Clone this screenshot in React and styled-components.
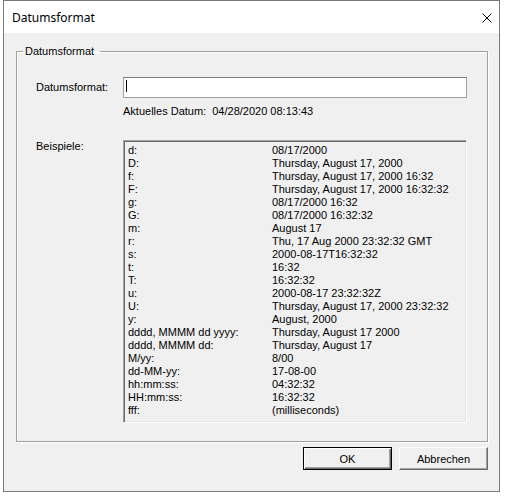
import { Fragment } from 'react';
import styled, { createGlobalStyle } from 'styled-components';

const GlobalStyle = createGlobalStyle`
  html, body {
    margin: 0;
    padding: 0;
    background: #fff;
  }
  body {
    font-family: "Liberation Sans", Arial, sans-serif;
    font-size: 11px;
    color: #000;
  }
`;

const EXAMPLES = [
  ['d:', '08/17/2000'],
  ['D:', 'Thursday, August 17, 2000'],
  ['f:', 'Thursday, August 17, 2000 16:32'],
  ['F:', 'Thursday, August 17, 2000 16:32:32'],
  ['g:', '08/17/2000 16:32'],
  ['G:', '08/17/2000 16:32:32'],
  ['m:', 'August 17'],
  ['r:', 'Thu, 17 Aug 2000 23:32:32 GMT'],
  ['s:', '2000-08-17T16:32:32'],
  ['t:', '16:32'],
  ['T:', '16:32:32'],
  ['u:', '2000-08-17 23:32:32Z'],
  ['U:', 'Thursday, August 17, 2000 23:32:32'],
  ['y:', 'August, 2000'],
  ['dddd, MMMM dd yyyy:', 'Thursday, August 17 2000'],
  ['dddd, MMMM dd:', 'Thursday, August 17'],
  ['M/yy:', '8/00'],
  ['dd-MM-yy:', '17-08-00'],
  ['hh:mm:ss:', '04:32:32'],
  ['HH:mm:ss:', '16:32:32'],
  ['fff:', '(milliseconds)'],
];

const Window = styled.div`
  box-sizing: border-box;
  width: 497px;
  height: 492px;
  margin-left: 3px;
  border: 1px solid #7a7a7a;
  background: #f0f0f0;
  display: flex;
  flex-direction: column;
`;

const TitleBar = styled.div`
  height: 32px;
  flex: none;
  background: #fff;
  display: flex;
  align-items: center;
  justify-content: space-between;
  padding: 0 7px 0 8px;
  font-family: "Noto Sans", "Open Sans", sans-serif;
  font-size: 12px;
`;

const Title = styled.span`
  line-height: 16px;
  padding-top: 1px;
`;

const CloseIcon = styled.svg`
  width: 10px;
  height: 10px;
  display: block;
  margin-top: 1px;
`;

const Body = styled.div`
  flex: 1;
  display: flex;
  flex-direction: column;
  padding: 12px 11px 21px 12px;
`;

const GroupBox = styled.fieldset`
  flex: 1;
  min-width: 0;
  margin: 0;
  padding: 0;
  border: 1px solid #a0a0a0;
  box-shadow: inset 1px 1px #fff, 1px 1px #fff;
`;

const Legend = styled.legend`
  margin-left: 6px;
  padding: 0 6px 0 2px;
  line-height: 13px;
`;

const Form = styled.div`
  display: grid;
  grid-template-columns: 87px 344px;
  padding: 19px 0 0 19px;
`;

const Label = styled.span`
  line-height: 13px;
  align-self: ${(p) => (p.$top ? 'start' : 'center')};
  margin-top: ${(p) => (p.$top ? '22px' : '0')};
`;

const TextBox = styled.div`
  box-sizing: border-box;
  height: 21px;
  background: #fff;
  border: 1px solid #a0a0a0;
  border-top-color: #7a7a7a;
  padding: 2px 0 0 2px;
`;

const Caret = styled.span`
  display: block;
  width: 1px;
  height: 12px;
  background: #000;
`;

const CurrentDate = styled.div`
  grid-column: 2;
  margin-top: 7px;
  line-height: 13px;
`;

const ExampleList = styled.div`
  grid-column: 2;
  box-sizing: border-box;
  height: 283px;
  margin-top: 22px;
  border-style: solid;
  border-width: 1px;
  border-color: #a0a0a0 #fff #fff #a0a0a0;
  box-shadow: inset 1px 1px #696969, inset -1px -1px #e3e3e3;
  padding: 3px 4px;
  display: grid;
  grid-template-columns: 144px auto;
  align-content: start;
  line-height: 13px;
  white-space: nowrap;
`;

const ButtonRow = styled.div`
  display: flex;
  justify-content: flex-end;
  gap: 7px;
  margin-top: 5px;
`;

const Button = styled.button`
  box-sizing: border-box;
  width: 89px;
  height: 23px;
  margin: 0;
  padding: 0;
  font-family: "Liberation Sans", Arial, sans-serif;
  font-size: 11px;
  color: #000;
  background: #f0f0f0;
  border-style: solid;
  border-width: 1px;
  border-color: ${(p) => (p.$default ? '#000' : '#fff #696969 #696969 #fff')};
  box-shadow: ${(p) =>
    p.$default
      ? 'inset 1px 1px #fff, inset -1px -1px #696969, inset -2px -2px #a0a0a0'
      : 'inset -1px -1px #a0a0a0'};
`;

const App = () => (
  <>
    <GlobalStyle />
    <Window>
      <TitleBar>
        <Title>Datumsformat</Title>
        <CloseIcon viewBox="0 0 10 10">
          <path d="M0.5 0.5 L9.5 9.5 M9.5 0.5 L0.5 9.5" stroke="#000" strokeWidth="1" />
        </CloseIcon>
      </TitleBar>
      <Body>
        <GroupBox>
          <Legend>Datumsformat</Legend>
          <Form>
            <Label>Datumsformat:</Label>
            <TextBox>
              <Caret />
            </TextBox>
            <CurrentDate>Aktuelles Datum:&nbsp; 04/28/2020 08:13:43</CurrentDate>
            <Label $top>Beispiele:</Label>
            <ExampleList>
              {EXAMPLES.map(([format, sample]) => (
                <Fragment key={format}>
                  <span>{format}</span>
                  <span>{sample}</span>
                </Fragment>
              ))}
            </ExampleList>
          </Form>
        </GroupBox>
        <ButtonRow>
          <Button $default>OK</Button>
          <Button>Abbrechen</Button>
        </ButtonRow>
      </Body>
    </Window>
  </>
);

export default App;
